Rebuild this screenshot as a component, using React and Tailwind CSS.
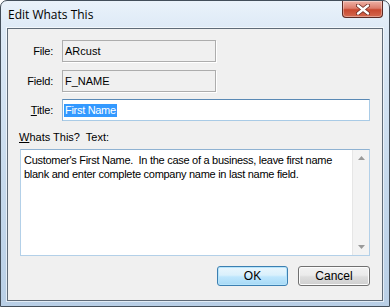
import React from 'react';

const ui = { fontFamily: '"Liberation Sans", Arial, sans-serif' };

const CloseButton = () => (
  <div className="w-[41px] h-[17px] mr-[6px] rounded-b-[4px] border border-t-0 border-[#5b2a24] bg-[linear-gradient(to_bottom,#eeb2a6_0%,#dc7d6c_45%,#c8482f_55%,#d4694f_100%)] flex items-center justify-center shadow-[inset_0_0_0_1px_rgba(255,255,255,0.35)]">
    <svg width="14" height="11" viewBox="0 0 14 11">
      <path d="M2 1.5 L12 9.5 M12 1.5 L2 9.5" stroke="#6b2a20" strokeWidth="4" strokeLinecap="round" />
      <path d="M2 1.5 L12 9.5 M12 1.5 L2 9.5" stroke="#ffffff" strokeWidth="2.4" strokeLinecap="round" />
    </svg>
  </div>
);

const ReadOnlyBox = ({ value }) => (
  <div className="w-[154px] h-[22px] border border-[#adadad] bg-[#f0f0f0] shadow-[1px_1px_0_#ffffff] flex items-center pl-[2px] text-[11px] text-black">
    {value}
  </div>
);

const Label = ({ children }) => (
  <div className="w-[45px] text-right text-[11px] tracking-[-0.2px] text-black">{children}</div>
);

const Arrow = ({ up }) => (
  <svg width="7" height="4" viewBox="0 0 7 4">
    <path d={up ? 'M0 4 L3.5 0 L7 4 Z' : 'M0 0 L7 0 L3.5 4 Z'} fill="#9a9a9a" />
  </svg>
);

export default function App() {
  return (
    <div
      className="w-[390px] h-[307px] flex flex-col border border-[#434e5a] rounded-t-[7px] overflow-hidden bg-[linear-gradient(to_bottom,#eaf2fa_0%,#dce9f6_10%,#c6d9ec_60%,#b9cfe6_100%)]"
      style={ui}
    >
      {/* title bar */}
      <div className="h-[27px] flex items-start justify-between shrink-0">
        <div
          className="pl-[7px] pt-[5px] text-[12px] text-black"
          style={{ fontFamily: '"Open Sans", "Noto Sans", sans-serif' }}
        >
          Edit Whats This
        </div>
        <CloseButton />
      </div>

      {/* client area */}
      <div className="mx-[6px] h-[273px] shrink-0 border border-[#5f6b78] bg-[#f0f0f0] shadow-[0_0_0_1px_rgba(255,255,255,0.6)] flex flex-col pt-[11px]">
        <div className="flex items-center">
          <Label>File:</Label>
          <div className="ml-[9px]">
            <ReadOnlyBox value="ARcust" />
          </div>
        </div>
        <div className="flex items-center mt-[8px]">
          <Label>Field:</Label>
          <div className="ml-[9px]">
            <ReadOnlyBox value="F_NAME" />
          </div>
        </div>
        <div className="flex items-center mt-[7px]">
          <Label>
            <span className="underline">T</span>itle:
          </Label>
          <div className="ml-[9px] w-[308px] h-[22px] bg-white border border-[#a9cbe6] border-t-[#5a89b5] border-l-[#8fb3d4] flex items-center pl-[1px]">
            <span className="bg-[#3399ff] text-white text-[11px] leading-[13px] tracking-[-0.3px] px-[1px]">First Name</span>
          </div>
        </div>

        <div className="mt-[10px] ml-[11px] text-[11px] leading-[13px] text-black">
          <span className="underline">W</span>
          <span className="whitespace-pre">{'hats This?  Text:'}</span>
        </div>

        <div className="mt-[5px] ml-[12px] w-[350px] h-[107px] bg-white border border-[#b3d0e8] border-t-[#8fb2d2] flex">
          <div className="flex-1 pl-[3px] pt-[3px] text-[11px] leading-[14px] tracking-[-0.28px] text-black whitespace-pre-wrap">
            {"Customer's First Name.  In the case of a business, leave first name\nblank and enter complete company name in last name field."}
          </div>
          <div className="w-[17px] bg-[#f3f3f3] border-l border-[#e6e6e6] flex flex-col items-center justify-between py-[6px]">
            <Arrow up />
            <Arrow />
          </div>
        </div>

        <div className="mt-[10px] pr-[12px] flex justify-end gap-[10px]">
          <button className="w-[71px] h-[20px] rounded-[3px] border border-[#3c7fb1] bg-[linear-gradient(to_bottom,#eaf6fd_0%,#d9f0fc_45%,#bee6fd_55%,#a7d9f5_100%)] shadow-[inset_0_0_0_1px_#b6e4fb] text-[12px] text-black">
            OK
          </button>
          <button className="w-[72px] h-[20px] rounded-[3px] border border-[#707070] bg-[linear-gradient(to_bottom,#f2f2f2_0%,#ebebeb_45%,#dddddd_55%,#cfcfcf_100%)] shadow-[inset_0_0_0_1px_#fcfcfc] text-[12px] text-black">
            Cancel
          </button>
        </div>
      </div>
    </div>
  );
}
